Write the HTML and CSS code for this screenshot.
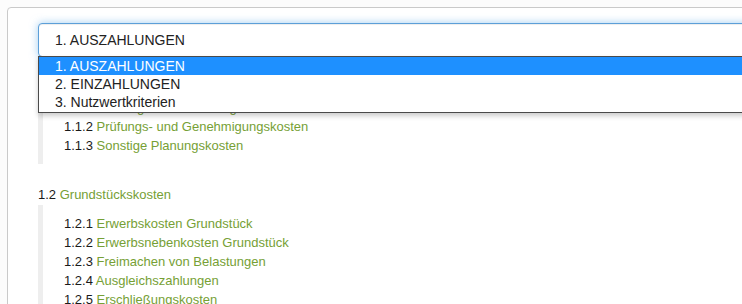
FILE: index.html
```html
<!DOCTYPE html>
<html>
<head>
    <meta charset="utf-8">
    <title>Kostengliederung</title>
    <link rel="stylesheet" href="styles.css">
</head>
<body>
<div class="panel">
    <div class="picker">
        <div class="select">1. AUSZAHLUNGEN</div>
        <div class="options">
            <div class="option active">1. AUSZAHLUNGEN</div>
            <div class="option">2. EINZAHLUNGEN</div>
            <div class="option">3. Nutzwertkriterien</div>
        </div>
    </div>

    <div class="group">
        <div class="head"><span class="num">1.1</span> <a>Planungskosten</a></div>
        <ul class="items">
            <li><span class="num">1.1.1</span> <a>Planungs- und Beratungskosten</a></li>
            <li><span class="num">1.1.2</span> <a>Prüfungs- und Genehmigungskosten</a></li>
            <li><span class="num">1.1.3</span> <a>Sonstige Planungskosten</a></li>
        </ul>
    </div>

    <div class="group">
        <div class="head"><span class="num">1.2</span> <a>Grundstückskosten</a></div>
        <ul class="items">
            <li><span class="num">1.2.1</span> <a>Erwerbskosten Grundstück</a></li>
            <li><span class="num">1.2.2</span> <a>Erwerbsnebenkosten Grundstück</a></li>
            <li><span class="num">1.2.3</span> <a>Freimachen von Belastungen</a></li>
            <li><span class="num">1.2.4</span> <a>Ausgleichszahlungen</a></li>
            <li><span class="num">1.2.5</span> <a>Erschließungskosten</a></li>
        </ul>
    </div>
</div>
</body>
</html>
```

FILE: styles.css
```css
body {
    font-family: "Liberation Sans", Arial, sans-serif;
    background-color: #fcfcfc;
    color: #333;
    margin: 0;
    padding: 0;
    height: 304px;
    overflow: hidden;
}

.panel {
    margin: 7px 0 0 7px;
    width: 900px;
    border: 1px solid #cacaca;
    border-radius: 4px;
    background-color: #fff;
    padding: 15px 30px 40px 30px;
}

.picker {
    position: relative;
}

.select {
    height: 32px;
    line-height: 32px;
    padding-left: 16px;
    font-size: 14px;
    color: #222;
    border: 1px solid #5c9fd8;
    border-radius: 4px;
    box-shadow: inset 0 1px 1px rgba(0, 0, 0, 0.075), 0 0 8px rgba(102, 175, 233, 0.6);
    background-color: #fff;
}

.options {
    position: absolute;
    top: 33px;
    left: 0;
    right: 0;
    z-index: 5;
    padding-bottom: 1px;
    background-color: #fff;
    border: 1px solid #4a4a4a;
    box-shadow: 0 3px 5px rgba(0, 0, 0, 0.2);
}

.option {
    height: 18px;
    line-height: 18px;
    padding-left: 16px;
    font-size: 14px;
    color: #222;
}

.option.active {
    background-color: #1e90ff;
    color: #fff;
}

.group {
    margin-top: 12px;
    font-size: 13px;
}

.group + .group {
    margin-top: 21px;
}

.head {
    line-height: 19px;
}

.num {
    color: #1a1a1a;
}

a {
    color: #76a035;
}

.items {
    list-style: none;
    margin: 1px 0 0 0;
    padding: 9px 0 9px 21px;
    border-left: 5px solid #eeeeee;
}

.items li {
    line-height: 19px;
}
```
